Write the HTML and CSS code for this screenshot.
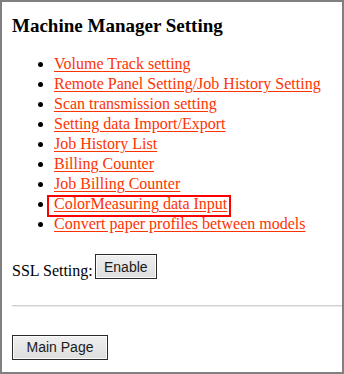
FILE: index.html
```html
<!DOCTYPE html>
<html lang="en">
<head>
  <meta charset="UTF-8">
  <title>Machine Manager Setting</title>
  <link rel="stylesheet" href="styles.css">
</head>
<body>
  <div class="frame">
    <h1>Machine Manager Setting</h1>

    <ul class="menu">
      <li><a href="#">Volume Track setting</a></li>
      <li><a href="#">Remote Panel Setting/Job History Setting</a></li>
      <li><a href="#">Scan transmission setting</a></li>
      <li><a href="#">Setting data Import/Export</a></li>
      <li><a href="#">Job History List</a></li>
      <li><a href="#">Billing Counter</a></li>
      <li><a href="#">Job Billing Counter</a></li>
      <li><span class="mark"><a href="#">ColorMeasuring data Input</a></span></li>
      <li><a href="#">Convert paper profiles between models</a></li>
    </ul>

    <div class="ssl">SSL Setting:<button class="btn btn-enable">Enable</button></div>

    <hr class="rule">

    <button class="btn btn-main">Main Page</button>
  </div>
</body>
</html>
```

FILE: styles.css
```css
* { box-sizing: border-box; }
body {
  margin: 0;
  background: #fff;
  color: #000;
  font-family: "Liberation Serif", "Times New Roman", serif;
  font-size: 16px;
}
.frame {
  width: 344px;
  height: 374px;
  border: 2px solid #808080;
  padding-left: 10px;
  overflow: hidden;
}
h1 {
  margin: 13px 0 17px;
  font-size: 19px;
  line-height: 22px;
  font-weight: bold;
}
.menu {
  margin: 0;
  padding-left: 42px;
  line-height: 20px;
}
.menu a {
  color: #ff3300;
  text-decoration: underline;
  text-underline-offset: 2px;
}
.mark { position: relative; }
.mark::before {
  content: '';
  position: absolute;
  left: -7px;
  right: -4px;
  top: 0;
  bottom: -5px;
  border: 2px solid #ff0000;
}
.ssl {
  margin-top: 20px;
  line-height: 20px;
}
.btn {
  font-family: "Liberation Sans", Arial, sans-serif;
  font-size: 14px;
  color: #1a1a1a;
  height: 25px;
  padding: 0;
  border: 1px solid #2b2b2b;
  box-shadow: inset 0 0 0 1px #fbfbfb;
  background: linear-gradient(#efefef, #dedede);
}
.btn-enable {
  width: 62px;
  margin-left: 2px;
  vertical-align: 4px;
}
.rule {
  margin: 24px 0 28px;
  border: 0;
  height: 2px;
  background: #d0d0d0;
  border-bottom: 1px solid #ececec;
}
.btn-main {
  width: 96px;
  display: block;
}
```
